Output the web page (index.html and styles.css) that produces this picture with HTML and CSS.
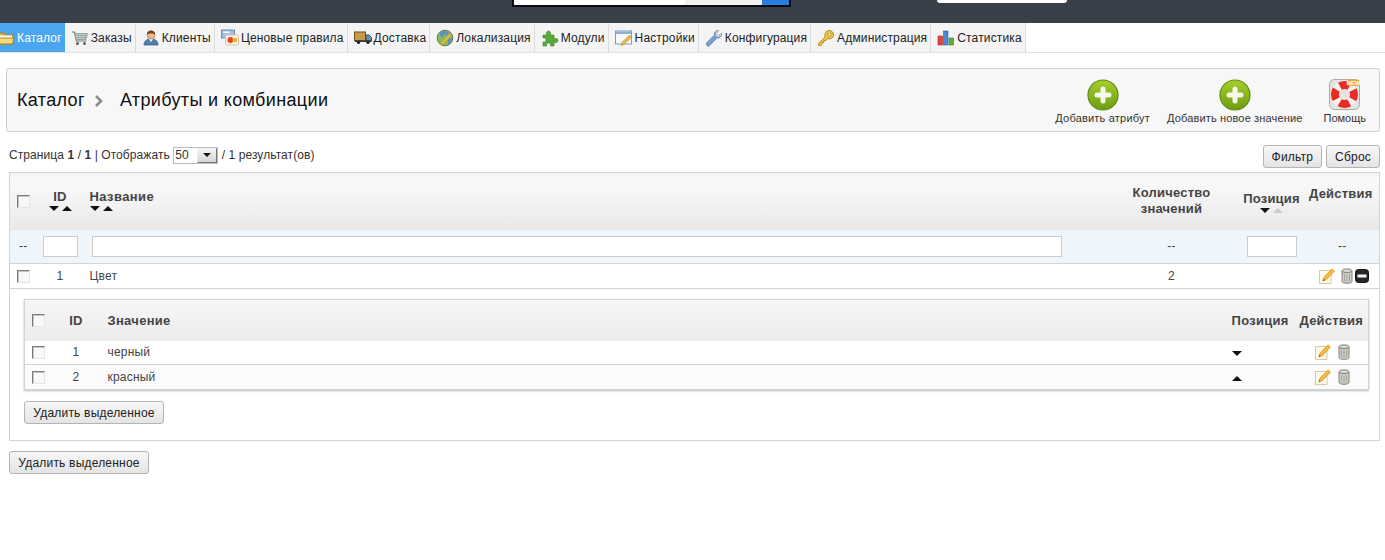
FILE: index.html
```html
<!DOCTYPE html>
<html lang="ru">

<head>
    <meta charset="UTF-8">
    <title>Атрибуты и комбинации</title>
    <link rel="stylesheet" href="styles.css">
</head>

<body>
    <svg class="defs" width="0" height="0">
        <defs>
            <linearGradient id="greenBall" x1="0" y1="0" x2="0" y2="1">
                <stop offset="0" stop-color="#a6cf2c" />
                <stop offset="1" stop-color="#6d9c12" />
            </linearGradient>
            <symbol id="plus" viewBox="0 0 32 32">
                <circle cx="16" cy="16" r="15" fill="url(#greenBall)" stroke="#5f8a12" stroke-width="1.2" />
                <path d="M16 10v12M10 16h12" fill="none" stroke="#f6f9ea" stroke-width="5" stroke-linecap="round" />
            </symbol>
            <symbol id="pencil" viewBox="0 0 16 16">
                <path d="M.5 2.500h11.500v13H.5z" fill="#fff9ea" stroke="#d8c9a5" />
                <path d="M13 .8l2.400 2.400-8 8.300-3.600 1.500 1.200-3.800z" fill="#f4bb3f" stroke="#d08f1c" stroke-width=".7" />
                <path d="M3.800 13l.6-2 1.400 1.200z" fill="#7a5a2a" />
            </symbol>
            <symbol id="bin" viewBox="0 0 12 16">
                <ellipse cx="6" cy="2.800" rx="5" ry="2" fill="#d6d6d1" stroke="#85857d" />
                <path d="M1 3v10.500c0 1 2 1.800 5 1.800s5-.8 5-1.800V3c-.6 1-2.600 1.600-5 1.600S1.600 4 1 3z" fill="#cdcdc7" stroke="#85857d" />
                <path d="M3.500 6v7M6 6.500v7M8.500 6v7" stroke="#a3a39b" />
            </symbol>
            <symbol id="minus" viewBox="0 0 14 14">
                <rect x=".5" y=".5" width="13" height="13" rx="3" fill="#24282c" stroke="#111" />
                <rect x="2.500" y="5.500" width="9" height="3" fill="#f4f4f4" />
            </symbol>
            <symbol id="help" viewBox="0 0 32 32">
                <rect x=".5" y=".5" width="30" height="30" rx="5" fill="#e4e4e2" stroke="#a9a9a5" />
                <circle cx="15.500" cy="15.500" r="9.500" fill="none" stroke="#f2f2f2" stroke-width="8" />
                <circle cx="15.500" cy="15.500" r="9.500" fill="none" stroke="#ea2b24" stroke-width="8" stroke-dasharray="10 4.920" stroke-dashoffset="5" />
                <rect x="18" y=".5" width="12.500" height="6.500" rx="2" fill="#f0a73a" />
                <text x="24.500" y="6" class="new-mark">NEW</text>
            </symbol>
            <symbol id="i-folder" viewBox="0 0 18 18">
                <path d="M1 4h6l1.500 2H16v9H1z" fill="#e3b23c" stroke="#ad8124" />
                <path d="M3 6.500h12v3H3z" fill="#fff" />
                <path d="M1 9h16l-1.500 6H1z" fill="#f6da7b" stroke="#ad8124" />
            </symbol>
            <symbol id="i-cart" viewBox="0 0 18 18">
                <path d="M1 3h2.500l2 9h10" fill="none" stroke="#6f7a78" stroke-width="1.200" />
                <path d="M4 4.500h12.500l-1.500 6H5.300z" fill="#cfd6d2" stroke="#8a9590" stroke-width=".8" />
                <path d="M5 6.500h11M5.500 8.500h10M7.500 4.500v6M11 4.500v6M14 4.500v6" stroke="#8a9590" stroke-width=".6" />
                <circle cx="6.500" cy="14.500" r="1.500" fill="#59625f" />
                <circle cx="13.500" cy="14.500" r="1.500" fill="#59625f" />
            </symbol>
            <symbol id="i-user" viewBox="0 0 18 18">
                <path d="M2 16c0-4 2.500-6 7-6s7 2 7 6z" fill="#4f7fb5" stroke="#33587f" stroke-width=".7" />
                <path d="M7 10l2 3 2-3z" fill="#fff" />
                <circle cx="9" cy="6" r="4" fill="#e9b98d" stroke="#9a6b42" stroke-width=".6" />
                <path d="M5 5.500C5 2.500 7 1.500 9 1.500s4 1 4 4c-1.500-1.500-6-1.500-8 0z" fill="#7a3f1c" />
            </symbol>
            <symbol id="i-price" viewBox="0 0 18 18">
                <rect x=".5" y="1" width="13" height="8" fill="#9fc1e0" stroke="#6d90b2" />
                <rect x="2.500" y="2.500" width="6" height="1.500" fill="#fff" />
                <rect x="4.500" y="6" width="13" height="10" rx="1" fill="#f7f0e2" stroke="#d9c9a8" />
                <circle cx="9.500" cy="11" r="3" fill="#e8402a" />
                <rect x="11.500" y="9" width="4.500" height="4" fill="#f0b034" />
            </symbol>
            <symbol id="i-truck" viewBox="0 0 18 18">
                <rect x=".5" y="3" width="11" height="8.500" fill="#c99a45" stroke="#6b5326" />
                <path d="M12 6h3l2.500 2.500v3H12z" fill="#6f8fb4" stroke="#3c4d63" />
                <path d="M1 11.500h16.500v1.500H1z" fill="#33363a" />
                <circle cx="4.500" cy="13.500" r="1.600" fill="#222" />
                <circle cx="14" cy="13.500" r="1.600" fill="#222" />
            </symbol>
            <symbol id="i-globe" viewBox="0 0 18 18">
                <circle cx="9" cy="9" r="7.800" fill="#8dbb55" stroke="#5d7f52" />
                <path d="M4 3.500c3-2 7-2 9 0l-2 3-3-1-1 3-3-1zM12 10l4-1c0 3-1.500 5.500-4 6.500z" fill="#5e93bf" />
                <path d="M5 14L14 4.500 15.500 6 7 15l-3 1z" fill="#f0c04a" stroke="#b98a20" stroke-width=".5" />
            </symbol>
            <symbol id="i-puzzle" viewBox="0 0 18 18">
                <path d="M2 6h3.500C5 3.500 6 2 7.500 2S10 3.500 9.500 6H13v3.500c2.500-.5 4 .5 4 2s-1.500 2.500-4 2V17H9.500c.5-2-.5-3-2-3s-2.500 1-2 3H2v-4c2 .5 3-.5 3-2s-1-2.500-3-2z" fill="#5aa83a" stroke="#3f7f2a" stroke-width=".6" />
            </symbol>
            <symbol id="i-settings" viewBox="0 0 18 18">
                <rect x=".5" y="2" width="16" height="13" fill="#f6f8fb" stroke="#7d9bc0" />
                <rect x="1" y="2.500" width="15" height="2.500" fill="#8fb0d6" />
                <path d="M14.500 6l2 2-7.500 7.500-3 1 1-3z" fill="#efb84a" stroke="#b98a20" stroke-width=".6" />
            </symbol>
            <symbol id="i-wrench" viewBox="0 0 18 18">
                <path d="M1.500 14l8-8c-.5-2.500 1-4.500 4-4.500l-2 3 2 2 3-2c.2 3-2 5-4.500 4.500l-8 8c-1.500.8-3.200-1.200-2.500-3z" fill="#7d9fcf" stroke="#5473a0" stroke-width=".7" />
                <path d="M11 2.500l2.500-1-2 3 2 2 3-2-1 2.500-3 1-2-2z" fill="#d5d8dc" />
            </symbol>
            <symbol id="i-key" viewBox="0 0 18 18">
                <path d="M1.500 14.500l6.500-6.500C7.300 4.500 9 1.500 12 1.500s4.500 2 4.500 4.500-2.500 4.500-6 3.700L9 11.500H7v2H5v2l-1.500 1H1.500z" fill="#edbf3e" stroke="#a97c18" stroke-width=".8" />
                <circle cx="12.500" cy="5.500" r="1.400" fill="#fff4c8" stroke="#a97c18" stroke-width=".6" />
            </symbol>
            <symbol id="i-chart" viewBox="0 0 18 18">
                <rect x="1" y="7" width="4.500" height="9" fill="#e8453c" stroke="#a92a24" stroke-width=".6" />
                <rect x="6.500" y="2" width="4.500" height="14" fill="#4f86d6" stroke="#2b5da8" stroke-width=".6" />
                <rect x="12" y="9" width="4.500" height="7" fill="#62a83f" stroke="#3f7f2a" stroke-width=".6" />
            </symbol>
        </defs>
    </svg>

    <div class="topbar">
        <div class="search-box">
            <span class="search-field"></span>
            <span class="search-type"></span>
            <span class="search-go"></span>
        </div>
        <div class="quick-box"></div>
    </div>

    <ul class="tabs">
        <li class="tab tab-active"><svg class="tab-icon"><use href="#i-folder" /></svg>Каталог</li>
        <li class="tab"><svg class="tab-icon"><use href="#i-cart" /></svg>Заказы</li>
        <li class="tab"><svg class="tab-icon"><use href="#i-user" /></svg>Клиенты</li>
        <li class="tab"><svg class="tab-icon"><use href="#i-price" /></svg>Ценовые правила</li>
        <li class="tab"><svg class="tab-icon"><use href="#i-truck" /></svg>Доставка</li>
        <li class="tab"><svg class="tab-icon"><use href="#i-globe" /></svg>Локализация</li>
        <li class="tab"><svg class="tab-icon"><use href="#i-puzzle" /></svg>Модули</li>
        <li class="tab"><svg class="tab-icon"><use href="#i-settings" /></svg>Настройки</li>
        <li class="tab"><svg class="tab-icon"><use href="#i-wrench" /></svg>Конфигурация</li>
        <li class="tab"><svg class="tab-icon"><use href="#i-key" /></svg>Администрация</li>
        <li class="tab"><svg class="tab-icon"><use href="#i-chart" /></svg>Статистика</li>
    </ul>

    <div class="page">
        <div class="title-panel">
            <h1 class="breadcrumb">
                <span>Каталог</span>
                <svg class="crumb-arrow" viewBox="0 0 10 12"><path d="M2 1l5 5-5 5" fill="none" stroke="#8c8c8c" stroke-width="2.600" /></svg>
                <span>Атрибуты и комбинации</span>
            </h1>
            <div class="toolbar">
                <a class="tool tool-attr"><svg class="tool-icon"><use href="#plus" /></svg>Добавить атрибут</a>
                <a class="tool tool-value"><svg class="tool-icon"><use href="#plus" /></svg>Добавить новое значение</a>
                <a class="tool tool-help"><svg class="tool-icon"><use href="#help" /></svg>Помощь</a>
            </div>
        </div>

        <div class="list-bar">
            <div class="pager">
                Страница <b>1</b> / <b>1</b> | Отображать
                <span class="per-page"><span class="per-page-num">50</span><span class="per-page-btn"></span></span>
                / 1 результат(ов)
            </div>
            <div class="filter-btns">
                <button class="btn">Фильтр</button>
                <button class="btn">Сброс</button>
            </div>
        </div>

        <table class="grid">
            <colgroup>
                <col class="c-check">
                <col class="c-id">
                <col class="c-name">
                <col class="c-count">
                <col class="c-pos">
                <col class="c-act">
            </colgroup>
            <thead>
                <tr class="head-row">
                    <th class="cell-check"><input type="checkbox" class="chk"></th>
                    <th class="center">ID<div class="sort"><i class="arr-down"></i><i class="arr-up"></i></div></th>
                    <th class="left name-head">Название<div class="sort"><i class="arr-down"></i><i class="arr-up"></i></div></th>
                    <th class="center">Количество значений</th>
                    <th class="center pos-head">Позиция<div class="sort"><i class="arr-down"></i><i class="arr-up arr-off"></i></div></th>
                    <th class="center act-head">Действия</th>
                </tr>
                <tr class="filter-row">
                    <td class="dash-first">--</td>
                    <td class="center"><input class="filter-input id-input"></td>
                    <td class="name-filter"><input class="filter-input name-input"></td>
                    <td class="center">--</td>
                    <td class="center"><input class="filter-input pos-input"></td>
                    <td class="center">--</td>
                </tr>
            </thead>
            <tbody>
                <tr class="data-row">
                    <td class="cell-check"><input type="checkbox" class="chk"></td>
                    <td class="center">1</td>
                    <td class="left">Цвет</td>
                    <td class="center">2</td>
                    <td></td>
                    <td class="row-actions">
                        <svg class="ico-pencil"><use href="#pencil" /></svg>
                        <svg class="ico-bin"><use href="#bin" /></svg>
                        <svg class="ico-minus"><use href="#minus" /></svg>
                    </td>
                </tr>
                <tr>
                    <td colspan="6" class="detail">
                        <table class="subgrid">
                            <colgroup>
                                <col class="s-check">
                                <col class="s-id">
                                <col class="s-name">
                                <col class="s-pos">
                                <col class="s-act">
                            </colgroup>
                            <thead>
                                <tr class="sub-head">
                                    <th class="sub-check"><input type="checkbox" class="chk"></th>
                                    <th class="center">ID</th>
                                    <th class="left">Значение</th>
                                    <th class="left">Позиция</th>
                                    <th class="center sub-act-head">Действия</th>
                                </tr>
                            </thead>
                            <tbody>
                                <tr class="sub-row">
                                    <td class="sub-check"><input type="checkbox" class="chk"></td>
                                    <td class="center">1</td>
                                    <td class="left">черный</td>
                                    <td class="sub-pos"><i class="arr-down"></i></td>
                                    <td class="sub-actions">
                                        <svg class="ico-pencil"><use href="#pencil" /></svg>
                                        <svg class="ico-bin"><use href="#bin" /></svg>
                                    </td>
                                </tr>
                                <tr class="sub-row sub-row-alt">
                                    <td class="sub-check"><input type="checkbox" class="chk"></td>
                                    <td class="center">2</td>
                                    <td class="left">красный</td>
                                    <td class="sub-pos"><i class="arr-up"></i></td>
                                    <td class="sub-actions">
                                        <svg class="ico-pencil"><use href="#pencil" /></svg>
                                        <svg class="ico-bin"><use href="#bin" /></svg>
                                    </td>
                                </tr>
                            </tbody>
                        </table>
                        <button class="btn btn-delete">Удалить выделенное</button>
                    </td>
                </tr>
            </tbody>
        </table>

        <button class="btn btn-delete btn-bottom">Удалить выделенное</button>
    </div>
</body>

</html>
```

FILE: styles.css
```css
html,
body {
    margin: 0;
    padding: 0;
}

body {
    height: 560px;
    overflow: hidden;
    background-color: #fff;
    color: #333;
    font-family: "Liberation Sans", Arial, sans-serif;
    font-size: 12px;
}

.defs {
    position: absolute;
}

.new-mark {
    fill: #fff;
    font-family: "Liberation Sans", Arial, sans-serif;
    font-size: 6px;
    font-weight: bold;
    text-anchor: middle;
}

/* top bar */
.topbar {
    display: flex;
    align-items: flex-start;
    height: 23px;
    padding-left: 512px;
    background-color: #3a4049;
}

.search-box {
    display: flex;
    box-sizing: border-box;
    width: 279px;
    height: 7px;
    background-color: #fff;
    border: 2px solid #0b0b0d;
    border-top: none;
}

.search-field {
    flex: 1;
}

.search-type {
    width: 77px;
    background-color: #f1f1f1;
}

.search-go {
    width: 27px;
    background-color: #2a7de1;
}

.quick-box {
    width: 130px;
    height: 3px;
    margin-left: 146px;
    background-color: #fff;
    border-radius: 0 0 4px 4px;
}

/* tabs */
.tabs {
    display: flex;
    height: 29px;
    margin: 0;
    padding: 0;
    list-style-type: none;
    background-color: #fff;
    border-bottom: 1px solid #e4e4e4;
}

.tab {
    display: flex;
    align-items: center;
    gap: 2px;
    padding: 0 3px 0 6px;
    background-color: #f4f4f4;
    border-right: 1px solid #dcdcdc;
    color: #222;
    letter-spacing: 0.15px;
}

.tab-active {
    margin-left: -9px;
    background-color: #4aa6ef;
    border-right: none;
    color: #fff;
}

.tab-icon {
    width: 18px;
    height: 18px;
}

/* page */
.page {
    padding: 15px 5px 0 6px;
}

.title-panel {
    display: flex;
    justify-content: space-between;
    align-items: flex-start;
    box-sizing: border-box;
    height: 64px;
    background-color: #f7f7f7;
    border: 1px solid #ccc;
    border-radius: 3px;
}

.breadcrumb {
    display: flex;
    align-items: center;
    margin: 21px 0 0 10px;
    color: #111;
    font-size: 18px;
    font-weight: normal;
    letter-spacing: 0.35px;
}

.crumb-arrow {
    width: 10px;
    height: 12px;
    margin: 0 16px 0 9px;
}

.toolbar {
    display: flex;
    margin-right: 13px;
}

.tool {
    display: flex;
    flex-direction: column;
    align-items: center;
    padding-top: 10px;
    color: #333;
    font-size: 11px;
    letter-spacing: 0.2px;
}

.tool-value {
    margin-left: 17px;
    letter-spacing: 0.15px;
}

.tool-help {
    margin-left: 21px;
    letter-spacing: 0;
}

.tool-icon {
    width: 32px;
    height: 32px;
    margin-bottom: 1px;
}

/* pager line */
.list-bar {
    display: flex;
    justify-content: space-between;
    height: 40px;
    padding: 13px 0 0 3px;
    box-sizing: border-box;
}

.pager {
    height: 20px;
    line-height: 20px;
    letter-spacing: 0.08px;
}

.per-page {
    display: inline-flex;
    width: 45px;
    height: 17px;
    box-sizing: border-box;
    border: 1px solid #bbb;
    background-color: #fff;
    vertical-align: middle;
}

.per-page-num {
    flex: 1;
    padding-left: 1px;
    line-height: 15px;
}

.per-page-btn {
    position: relative;
    width: 20px;
    background: linear-gradient(#f5f5f5, #d5d5d5);
    border: 1px solid;
    border-color: #eee #777 #777 #eee;
    box-sizing: border-box;
}

.per-page-btn::after {
    content: "";
    position: absolute;
    left: 5px;
    top: 4px;
    border: 4px solid transparent;
    border-top-color: #111;
    border-bottom: none;
}

.filter-btns {
    display: flex;
    gap: 4px;
    height: 23px;
}

.btn {
    height: 23px;
    padding: 0 8px;
    background: linear-gradient(#f7f7f7, #e4e4e4);
    border: 1px solid #b4b4b4;
    border-radius: 3px;
    color: #222;
    font-family: "Liberation Sans", Arial, sans-serif;
    font-size: 12px;
    letter-spacing: 0.2px;
}

.btn-delete {
    width: 140px;
    padding: 0;
}

.btn-bottom {
    display: block;
    margin: 10px 0 0 3px;
}

/* main table */
.grid {
    width: 1370px;
    margin-left: 3px;
    border-collapse: collapse;
    table-layout: fixed;
    border: 1px solid #d4d4d4;
}

.c-check {
    width: 32px;
}

.c-id {
    width: 37px;
}

.c-name {
    width: 1027px;
}

.c-count {
    width: 132px;
}

.c-pos {
    width: 68px;
}

.c-act {
    width: 74px;
}

.grid th {
    padding: 0;
    color: #444;
    font-size: 13px;
    line-height: 16px;
    letter-spacing: 0.2px;
}

.grid td {
    padding: 0;
    color: #444;
    letter-spacing: 0.2px;
}

.center {
    text-align: center;
}

.left {
    padding-left: 11px !important;
    text-align: left;
}

.head-row {
    height: 57px;
    background: linear-gradient(#f3f3f3, #fafafa 12%, #e9e9e9);
}

.grid th:nth-child(4) {
    padding: 0 22px;
}

.grid .name-head {
    letter-spacing: 0.4px;
}

.cell-check {
    padding-left: 7px !important;
}

.chk {
    display: block;
    appearance: none;
    box-sizing: border-box;
    width: 13px;
    height: 13px;
    margin: 0;
    background-color: #f8f8f8;
    border: 1px solid;
    border-color: #7c7c7c #e4e4e4 #e4e4e4 #7c7c7c;
    box-shadow: inset 1px 1px 0 #c4c4c4;
}

.sort {
    display: flex;
    gap: 3px;
    height: 7px;
    margin-top: 1px;
}

.center .sort {
    justify-content: center;
}

.arr-down,
.arr-up {
    display: inline-block;
    width: 0;
    height: 0;
    border-left: 5px solid transparent;
    border-right: 5px solid transparent;
}

.arr-down {
    border-top: 5px solid #111;
}

.arr-up {
    border-bottom: 5px solid #111;
}

.arr-off {
    border-bottom-color: #ccc;
}

.act-head {
    padding: 0 3px 14px 0 !important;
}

.pos-head {
    padding-top: 4px !important;
}

.filter-row {
    height: 34px;
    background-color: #eef5fb;
    border-bottom: 1px solid #d4d4d4;
}

.dash-first {
    padding-left: 9px !important;
}

.filter-input {
    display: inline-block;
    box-sizing: border-box;
    height: 21px;
    margin: 0;
    background-color: #fff;
    border: 1px solid #ccc;
    vertical-align: middle;
}

.id-input {
    width: 35px;
}

.name-filter {
    padding-left: 13px !important;
}

.name-input {
    width: 970px;
}

.pos-input {
    width: 50px;
}

.data-row {
    height: 25px;
    border-bottom: 1px solid #d4d4d4;
}

.row-actions {
    padding-left: 13px !important;
    white-space: nowrap;
}

.row-actions svg,
.sub-actions svg {
    vertical-align: middle;
}

.ico-pencil {
    width: 16px;
    height: 16px;
}

.ico-bin {
    width: 12px;
    height: 16px;
    margin-left: 3px;
}

.ico-minus {
    width: 14px;
    height: 14px;
    margin-left: -2px;
}

/* values table */
.detail {
    padding: 10px 0 16px 14px !important;
    vertical-align: top;
}

.subgrid {
    width: 1344px;
    border-collapse: collapse;
    table-layout: fixed;
    border: 1px solid #d4d4d4;
    box-shadow: 0 1px 2px #bbb;
}

.s-check {
    width: 33px;
}

.s-id {
    width: 37px;
}

.s-name {
    width: 1127px;
}

.s-pos {
    width: 68px;
}

.s-act {
    width: 79px;
}

.sub-head {
    height: 41px;
    background: linear-gradient(#f7f7f7, #ececec);
}

.grid .subgrid th {
    padding-top: 1px;
    letter-spacing: 0.3px;
}

.grid .subgrid .sub-act-head {
    padding-left: 5px !important;
    letter-spacing: 0.2px;
}

.sub-check {
    padding-left: 7px !important;
}

.sub-row {
    height: 24px;
    background-color: #fff;
}

.sub-row-alt {
    height: 25px;
    background-color: #fbfbfb;
    border-top: 1px solid #d4d4d4;
}

.sub-pos {
    padding-left: 10px !important;
}

.sub-actions {
    padding-left: 25px !important;
    white-space: nowrap;
}

.sub-actions .ico-bin {
    margin-left: 4px;
}

.subgrid .left {
    padding-left: 13px !important;
}

.subgrid th:nth-child(4) {
    padding-left: 10px !important;
}

.detail .btn-delete {
    display: block;
    margin-top: 11px;
}
```
